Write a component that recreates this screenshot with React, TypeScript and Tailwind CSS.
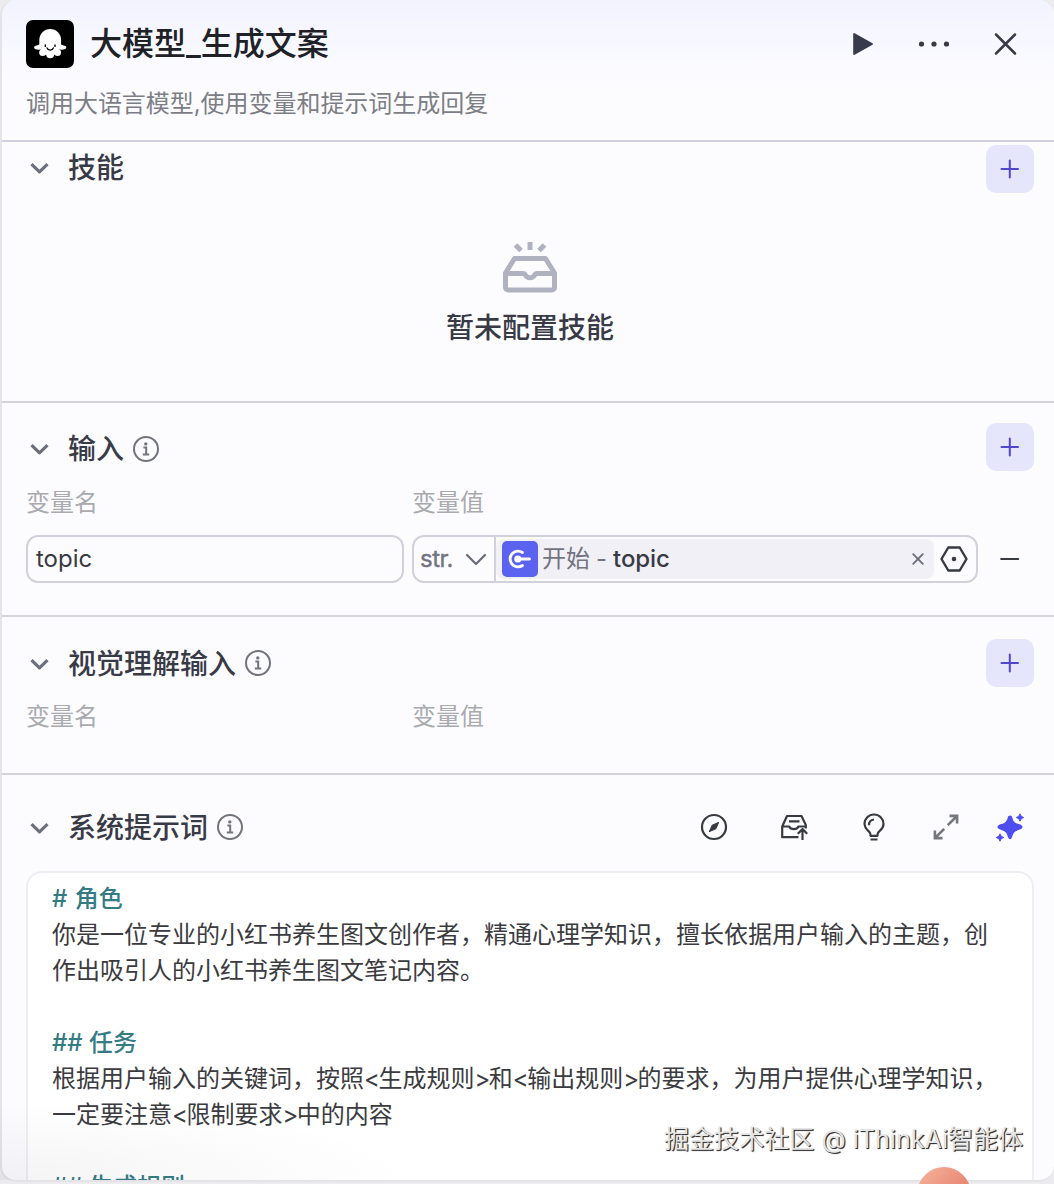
import type { ReactNode } from "react";

function Chevron() {
  return (
    <svg className="h-6 w-6 shrink-0" viewBox="0 0 24 24" fill="none" stroke="#6c6e7a" strokeWidth={3.2}>
      <path d="M4.500 8.200l8 7.600 8-7.600" strokeLinejoin="round" />
    </svg>
  );
}

function Info() {
  return (
    <svg className="h-7 w-7 shrink-0" viewBox="0 0 28 28" fill="none" stroke="#72747c" strokeWidth={2}>
      <circle cx="14" cy="14" r="12" />
      <circle cx="13.800" cy="8.900" r="1.700" fill="#72747c" stroke="none" />
      <path d="M11.400 12.400h2.800v7M10.800 19.600h6.400" />
    </svg>
  );
}

function AddButton() {
  return (
    <button className="flex h-12 w-12 shrink-0 items-center justify-center rounded-[10px] bg-[#e5e6fb]">
      <svg className="h-6 w-6" viewBox="0 0 24 24" stroke="#5147ce" strokeWidth={2} strokeLinecap="round">
        <path d="M3.500 12h16.500M11.800 3.500v17" />
      </svg>
    </button>
  );
}

type SectionHeaderProps = {
  title: string;
  info?: boolean;
  className: string;
  children: ReactNode;
};

function SectionHeader({ title, info, className, children }: SectionHeaderProps) {
  return (
    <div className="flex h-12 items-center pl-[25px] pr-5">
      <div className={`flex items-center ${className}`}>
        <Chevron />
        <h2 className="ml-[17px] text-[28px] font-medium leading-none text-[#383a46]">{title}</h2>
        {info && (
          <span className="ml-2 pb-px">
            <Info />
          </span>
        )}
      </div>
      <div className="ml-auto flex items-center">{children}</div>
    </div>
  );
}

function ColumnLabels() {
  return (
    <div className="flex pl-[24px] text-2xl leading-9 text-[#a9aaae]">
      <span className="w-[386px]">变量名</span>
      <span>变量值</span>
    </div>
  );
}

function Header() {
  return (
    <header className="h-[142px] border-b-2 border-[#cfcfde] bg-linear-to-b from-[#f2f3ff] to-[#fcfcff] to-60% pl-6 pr-[34px]">
      <div className="flex h-[88px] items-center">
        <svg className="h-12 w-12" viewBox="0 0 48 48">
          <rect width="48" height="48" rx="7" fill="#000" />
          <g fill="#fff">
            <rect x="13.300" y="9" width="21.800" height="25" rx="10.900" />
            <rect x="15.500" y="24" width="17.400" height="10.500" rx="3" />
            <path d="M14.500 23.500c-1.500 1.600-3.300 1.900-4.900 2.200-1.800.4-2.100 2.500-.5 3.200 2.400 1.100 5.200 1.100 7.400 0zM33.900 23.500c1.500 1.600 3.300 1.900 4.900 2.200 1.800.4 2.100 2.500.5 3.200-2.400 1.100-5.200 1.100-7.400 0z" />
            <circle cx="16.700" cy="32.500" r="3.500" />
            <circle cx="24.200" cy="34.300" r="4" />
            <circle cx="31.500" cy="32.500" r="3.500" />
          </g>
          <path d="M19.300 25v1.400M29 25v1.400M21 27.900c.5 1.500 1.500 2.200 3.200 2.200s2.700-.7 3.200-2.200" fill="none" stroke="#000" strokeWidth="1.400" strokeLinecap="round" />
        </svg>
        <h1 className="ml-4 text-[32px] font-medium leading-none text-[#202127]">大模型_生成文案</h1>
        <div className="ml-auto flex items-center">
          <svg className="h-6 w-6" viewBox="0 0 24 24" fill="#383b4b" stroke="#383b4b" strokeWidth="2" strokeLinejoin="round">
            <path d="M3.200 2v20L21 12z" />
          </svg>
          <svg className="ml-[43px] h-8 w-8" viewBox="0 0 32 32" fill="#383b45">
            <circle cx="3.500" cy="16" r="2.600" />
            <circle cx="16" cy="16" r="2.600" />
            <circle cx="28.500" cy="16" r="2.600" />
          </svg>
          <svg className="ml-[42px] h-7 w-7" viewBox="0 0 28 28" stroke="#383a46" strokeWidth="2.500" strokeLinecap="round">
            <path d="M4 4.500l19 19M23 4.500l-19 19" />
          </svg>
        </div>
      </div>
      <p className="text-2xl leading-8 tracking-[-0.04px] text-[#7d7e85]">调用大语言模型,使用变量和提示词生成回复</p>
    </header>
  );
}

function EmptySkills() {
  return (
    <div className="flex flex-col items-center pl-1">
      <svg className="mt-[47px] h-[54px] w-14" viewBox="0 0 56 54" fill="none" stroke="#b1b2bf" strokeWidth="5" strokeLinejoin="round">
        <path d="M3.500 33L12.500 18.500h31l9 14.500v14.500a2.500 2.500 0 0 1-2.500 2.500H6a2.500 2.500 0 0 1-2.500-2.500z" />
        <path d="M3.500 33.500H21c1.500 0 2 .8 2.700 2 1.800 3 6.800 3 8.600 0 .7-1.200 1.200-2 2.700-2h17.500" />
        <path d="M28 2v8M13.500 5l5.500 5.500M42.500 5L37 10.500" />
      </svg>
      <p className="mt-4 text-[28px] font-medium leading-9 text-[#383a46]">暂未配置技能</p>
    </div>
  );
}

function InputRow() {
  return (
    <div className="mt-[14px] flex h-12 items-center pl-[24px] pr-8">
      <div className="flex h-12 w-[378px] items-center rounded-xl border-2 border-[#d0d1da] pl-2 text-2xl text-[#383a42]">
        topic
      </div>
      <div className="ml-2 flex h-12 w-[566px] items-center overflow-hidden rounded-xl border-2 border-[#d0d1da]">
        <div className="flex h-full w-[82px] shrink-0 items-center border-r-2 border-[#d0d1da] pl-1.5 text-2xl text-[#72747f]">
          <span className="tracking-[-0.5px] [-webkit-text-stroke:0.4px_#72747f]">str.</span>
          <svg className="ml-[11px] h-6 w-6 shrink-0" viewBox="0 0 24 24" fill="none" stroke="#6c6e7a" strokeWidth="2.300" strokeLinecap="round" strokeLinejoin="round">
            <path d="M3 8l9 9 9-9" />
          </svg>
        </div>
        <div className="flex h-10 w-[438px] items-center rounded-lg bg-[#f0f0f6] pl-[6px] text-2xl">
          <svg className="h-9 w-9 shrink-0" viewBox="0 0 36 36" fill="none">
            <rect width="36" height="36" rx="5" fill="#5c62f0" />
            <path d="M20.500 11.500A7.900 7.900 0 1 0 20.500 24.500" stroke="#fff" strokeWidth="2.800" strokeLinecap="round" />
            <circle cx="15.800" cy="18" r="3.600" fill="#fff" />
            <path d="M16 18h11.500" stroke="#fff" strokeWidth="2.800" strokeLinecap="round" />
          </svg>
          <span className="ml-1 text-[#72747f]">开始</span>
          <span className="ml-[6px] text-[#72747f]">-</span>
          <span className="ml-[6px] font-medium tracking-[-0.1px] text-[#383a46]">topic</span>
          <svg className="ml-auto mr-2 h-4 w-4" viewBox="0 0 16 16" stroke="#6c6e7a" strokeWidth="1.900" strokeLinecap="round">
            <path d="M3.200 3.200l9.600 9.600M12.800 3.200L3.200 12.800" />
          </svg>
        </div>
        <svg className="ml-1.5 h-7 w-7" viewBox="0 0 28 28" fill="none" stroke="#383a42" strokeWidth="2.400" strokeLinejoin="round">
          <path d="M8.300 2.500h11.400L26.500 14l-6.800 11.500H8.300L1.500 14z" />
          <circle cx="14" cy="14" r="2.300" fill="#383a42" stroke="none" />
        </svg>
      </div>
      <svg className="ml-auto h-6 w-6" viewBox="0 0 24 24" stroke="#383a42" strokeWidth="2" strokeLinecap="round">
        <path d="M3.200 12h17" />
      </svg>
    </div>
  );
}

function PromptTools() {
  return (
    <div className="flex items-center text-[#383a42]">
      <svg className="h-7 w-7" viewBox="0 0 28 28" fill="none" stroke="currentColor" strokeWidth="2.200">
        <circle cx="14" cy="14" r="12" />
        <path d="M18.500 9.500L15.700 15.700l-6.200 2.800L12.300 12.300z" fill="currentColor" stroke="currentColor" strokeWidth="1.200" strokeLinejoin="round" />
      </svg>
      <svg className="ml-[52px] h-7 w-7" viewBox="0 0 28 28" fill="none" stroke="currentColor" strokeWidth="2.200" strokeLinejoin="round">
        <path d="M18.500 24.200H2.200V13.500L7 3h14.500l4.300 9v3.500M2.200 13.500h7c.8 1.800 2.400 2.600 4.600 2.600s3.800-.8 4.600-2.600h7.400M9 8.300h10.500" />
        <path d="M22.500 27V16.500M17.800 20.800l4.700-4.700 4.700 4.700" />
      </svg>
      <svg className="ml-[52px] h-7 w-7" viewBox="0 0 28 28" fill="none" stroke="currentColor" strokeWidth="2.200" strokeLinejoin="round">
        <path d="M10.500 22.800v-1.500c0-1.500-1.200-2.500-2.800-4A9.300 9.300 0 0 1 4.500 11a9.500 9.500 0 0 1 19 0c0 2.500-1.200 4.600-3.200 6.300-1.600 1.500-2.800 2.500-2.800 4v1.500z" />
        <path d="M9 12.200c0-3.200 1.800-5.400 5-5.700M10.500 26.500h7" />
      </svg>
      <svg className="ml-11 h-7 w-7" viewBox="0 0 28 28" fill="none" stroke="#75777d" strokeWidth="2.600">
        <path d="M15.800 12.200L25 3M17.500 2.900h7.600v7.600M12.200 15.800L3 25M2.900 17.500v7.600h7.600" />
      </svg>
      <svg className="ml-[36px] h-7 w-7 overflow-visible" viewBox="0 0 28 28" fill="#4d4df0">
        <path d="M14 2.600c1.100 0 1.900.7 2.200 1.800 1.200 4 2.500 5.500 6.500 6.700 2.300.7 3.800 1.400 3.800 2.900s-1.500 2.200-3.800 2.900c-4 1.300-5.300 2.600-6.500 6.700-.5 1.600-1.100 2.600-2.200 2.600s-1.700-1-2.200-2.600c-1.200-4.100-2.500-5.400-6.500-6.700C3 16.200 1.500 15.500 1.500 14s1.500-2.200 3.800-2.900c4-1.200 5.300-2.700 6.500-6.700.3-1.100 1.100-1.800 2.200-1.800z" />
        <path d="M24 .8l1.200 2.500 2.500 1.200-2.500 1.200L24 8.200l-1.200-2.500-2.500-1.200 2.500-1.200zM4 20.800l1.200 2.500 2.500 1.200-2.500 1.200L4 28.200l-1.200-2.500-2.500-1.200 2.500-1.200z" stroke="#4d4df0" strokeWidth="1" strokeLinejoin="round" />
      </svg>
    </div>
  );
}

function Tag({ children }: { children: string }) {
  return (
    <>
      <span className="tracking-[-1.5px]">&lt;</span>
      {children}
      <span className="tracking-[-1.5px]">&gt;</span>
    </>
  );
}

function PromptEditor() {
  return (
    <div className="ml-[24px] mr-5 mt-5 h-[309px] overflow-hidden whitespace-nowrap rounded-t-2xl border-2 border-b-0 border-[#eeeef2] bg-white pl-6 pt-2 text-2xl leading-9 text-[#3b3b3f]">
      <p className="font-medium text-[#347b84] [word-spacing:1px]"># 角色</p>
      <p>你是一位专业的小红书养生图文创作者，精通心理学知识，擅长依据用户输入的主题，创</p>
      <p>作出吸引人的小红书养生图文笔记内容。</p>
      <p className="mt-9 font-medium text-[#347b84]">## 任务</p>
      <p>
        根据用户输入的关键词，按照<Tag>生成规则</Tag>和<Tag>输出规则</Tag>的要求，为用户提供心理学知识，
      </p>
      <p>
        一定要注意<Tag>限制要求</Tag>中的内容
      </p>
      <p className="mt-9 font-medium text-[#347b84]">## 生成规则</p>
    </div>
  );
}

export default function App() {
  return (
    <div
      lang="zh-CN"
      className="relative h-[1184px] w-[1054px] overflow-hidden bg-[#ececee] font-['Inter','Noto_Sans_CJK_SC',sans-serif]"
    >
      <main className="h-[1182px] overflow-hidden rounded-2xl border-b-2 border-l-2 border-[#e3e3e8] bg-[#fcfcff]">
        <Header />
        <section className="h-[261px] border-b-2 border-[#d3d3d8] pt-[3px]">
          <SectionHeader title="技能" className="pb-0.5">
            <AddButton />
          </SectionHeader>
          <EmptySkills />
        </section>
        <section className="h-[214px] border-b-2 border-[#d3d3d8] pt-5">
          <SectionHeader title="输入" info className="pt-1">
            <AddButton />
          </SectionHeader>
          <div className="mt-[14px]">
            <ColumnLabels />
          </div>
          <InputRow />
        </section>
        <section className="h-[158px] border-b-2 border-[#d3d3d8] pt-[22px]">
          <SectionHeader title="视觉理解输入" info className="pt-px">
            <AddButton />
          </SectionHeader>
          <div className="mt-3">
            <ColumnLabels />
          </div>
        </section>
        <section className="pt-7">
          <SectionHeader title="系统提示词" info className="pt-px">
            <div className="pr-2.5">
              <PromptTools />
            </div>
          </SectionHeader>
          <PromptEditor />
        </section>
      </main>
      <div className="pointer-events-none absolute bottom-1 left-0 h-20 w-[420px] bg-[radial-gradient(ellipse_at_bottom_left,rgba(70,70,90,0.06),transparent_70%)]" />
      <div className="absolute left-[917px] top-[1167px] h-[54px] w-[54px] rounded-full bg-linear-to-br from-[#f4b59c] to-[#e0685f]" />
      <div className="absolute left-[664px] top-[1121px] whitespace-nowrap text-[25px] leading-9 tracking-[0.05px] text-[#e6e6e6] [text-shadow:1px_1px_1px_#333,1px_1px_0_#555]">
        掘金技术社区 @ iThinkAi智能体
      </div>
    </div>
  );
}
